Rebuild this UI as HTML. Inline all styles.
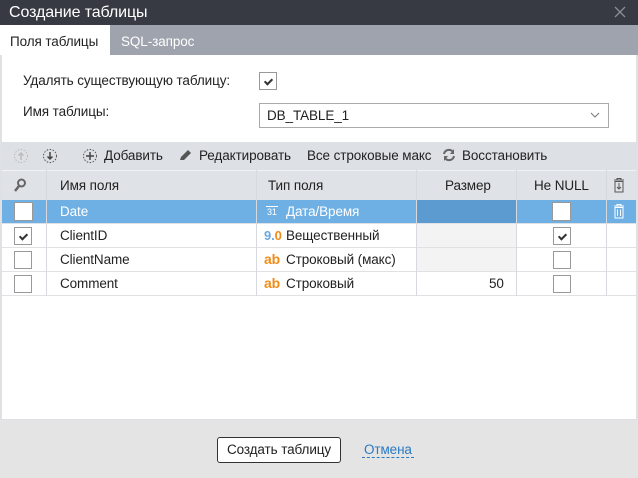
<!DOCTYPE html>
<html><head><meta charset="utf-8"><style>
*{margin:0;padding:0;box-sizing:border-box}
body{width:638px;height:478px;position:relative;overflow:hidden;background:#fff;font-family:"Liberation Sans","DejaVu Sans",sans-serif;font-size:13.5px;color:#222;letter-spacing:-0.1px}
.a{position:absolute}
.cb{position:absolute;width:18px;height:18px;border:1px solid #999;background:#fff}
.ck::after{content:"";position:absolute;left:6px;top:4px;width:3px;height:6px;border:solid #333;border-width:0 2px 2px 0;transform:rotate(45deg)}
.vl{position:absolute;top:170px;height:126px;width:1px;background:#d6d9de}
.hl{position:absolute;left:2px;width:634px;height:1px;background:#dfe1e4}
.ab{color:#f08c18;font-weight:bold;font-size:14px}
</style></head><body>
<div class="a" style="left:0;top:0;width:638px;height:25px;background:#373a43;color:#fff;font-size:16px;line-height:25px;padding-left:9px">Создание таблицы</div>
<svg class="a" style="left:614px;top:6px" width="12" height="12"><path d="M1 1L11 11M11 1L1 11" stroke="#8a8d95" stroke-width="1.3"/></svg>
<div class="a" style="left:0;top:25px;width:638px;height:30px;background:#9ea3ae"></div>
<div class="a" style="left:0;top:25px;width:110px;height:30px;background:#fff;line-height:34px;padding-left:10px">Поля таблицы</div>
<div class="a" style="left:121px;top:25px;line-height:34px;color:#fff">SQL-запрос</div>
<div class="a" style="left:0;top:55px;width:2px;height:365px;background:#dfe1e4"></div>
<div class="a" style="left:636px;top:55px;width:2px;height:365px;background:#dfe1e4"></div>
<div class="a" style="left:23px;top:73px">Удалять существующую таблицу:</div>
<div class="cb ck" style="left:259px;top:72px"></div>
<div class="a" style="left:23px;top:104px">Имя таблицы:</div>
<div class="a" style="left:259px;top:103px;width:350px;height:25px;border:1px solid #aaa;padding-left:7px;line-height:24px">DB_TABLE_1</div>
<svg class="a" style="left:590px;top:112px" width="10" height="6"><path d="M1 1L5 5L9 1" stroke="#777" fill="none"/></svg>
<div class="a" style="left:2px;top:142px;width:634px;height:28px;background:#dde0e5"></div>
<svg class="a" style="left:13px;top:148px" width="16" height="16"><circle cx="8" cy="8" r="6.5" fill="none" stroke="#bbb" stroke-dasharray="1.5 1.5"/><path d="M8 12V5M5.5 7.5L8 5L10.5 7.5" stroke="#bbb" stroke-width="1.5" fill="none"/></svg>
<svg class="a" style="left:42px;top:148px" width="16" height="16"><circle cx="8" cy="8" r="6.5" fill="none" stroke="#555" stroke-dasharray="1.5 1.5"/><path d="M8 4V11M5.5 8.5L8 11L10.5 8.5" stroke="#444" stroke-width="1.5" fill="none"/></svg>
<svg class="a" style="left:82px;top:148px" width="16" height="16"><circle cx="8" cy="8" r="6.5" fill="none" stroke="#555" stroke-dasharray="1.5 1.5"/><path d="M8 4V12M4 8H12" stroke="#444" stroke-width="1.5"/></svg>
<div class="a" style="left:104px;top:148px">Добавить</div>
<svg class="a" style="left:178px;top:148px" width="16" height="14"><path d="M2 12L3 9L10 2L13 5L6 12Z" fill="#555"/></svg>
<div class="a" style="left:199px;top:148px">Редактировать</div>
<div class="a" style="left:307px;top:148px">Все строковые макс</div>
<svg class="a" style="left:442px;top:148px" width="14" height="14"><path d="M2 6A5 5 0 0 1 11 4M12 8A5 5 0 0 1 3 10" stroke="#666" stroke-width="2" fill="none"/><path d="M12 1V6H8Z M2 13V8H6Z" fill="#666"/></svg>
<div class="a" style="left:462px;top:148px">Восстановить</div>
<div class="a" style="left:2px;top:170px;width:634px;height:30px;background:#dfe2e6;border-top:1px solid #f2f3f5"></div>
<svg class="a" style="left:13px;top:178px" width="14" height="14"><circle cx="8.5" cy="5" r="3.5" fill="none" stroke="#666" stroke-width="2"/><path d="M6 8L2 13" stroke="#666" stroke-width="2.5"/></svg>
<div class="a" style="left:60px;top:178px">Имя поля</div>
<div class="a" style="left:268px;top:178px">Тип поля</div>
<div class="a" style="left:445px;top:178px">Размер</div>
<div class="a" style="left:534px;top:178px">Не NULL</div>
<svg class="a" style="left:613px;top:178px" width="12" height="15"><path d="M1 2H11M4 2V0.5H8V2" stroke="#555" fill="none"/><rect x="2" y="3.5" width="8" height="10.5" fill="none" stroke="#555"/><path d="M6 5V11M4 9L6 11L8 9" stroke="#555" fill="none"/></svg>
<div class="a" style="left:2px;top:200px;width:634px;height:23px;background:#6eb0e4"></div>
<div class="a" style="left:416px;top:200px;width:100px;height:23px;background:#5c9bd0"></div>
<div class="a" style="left:416px;top:224px;width:100px;height:47px;background:#f3f3f3"></div>
<div class="hl" style="top:223px"></div><div class="hl" style="top:247px"></div><div class="hl" style="top:271px"></div><div class="hl" style="top:295px"></div>
<div class="vl" style="left:46px"></div><div class="vl" style="left:256px"></div><div class="vl" style="left:416px"></div><div class="vl" style="left:516px"></div><div class="vl" style="left:606px"></div>
<div class="cb" style="left:14px;top:202px;width:19px;height:19px"></div>
<div class="a" style="left:60px;top:204px;color:#fff">Date</div>
<div class="a" style="left:266px;top:206px;color:#fff;font-size:9px;border-top:1px solid #fff;line-height:11px;padding:0 1px">31</div>
<div class="a" style="left:286px;top:204px;color:#fff">Дата/Время</div>
<div class="cb" style="left:552px;top:202px;width:19px;height:19px"></div>
<svg class="a" style="left:613px;top:204px" width="12" height="15"><path d="M1 2H11M4 2V0.5H8V2" stroke="#fff" fill="none"/><rect x="2" y="3.5" width="8" height="10.5" fill="none" stroke="#fff"/><path d="M4.5 5.5V12M7.5 5.5V12" stroke="#fff"/></svg>
<div class="cb ck" style="left:14px;top:227px"></div>
<div class="a" style="left:60px;top:228px">ClientID</div>
<div class="a" style="left:264px;top:228px;font-weight:bold;font-size:13px;color:#6aa8de">9.<span style="color:#f08c18">0</span></div>
<div class="a" style="left:286px;top:228px">Вещественный</div>
<div class="cb ck" style="left:553px;top:227px"></div>
<div class="cb" style="left:14px;top:251px"></div>
<div class="a" style="left:60px;top:252px">ClientName</div>
<div class="a ab" style="left:264px;top:251px">ab</div>
<div class="a" style="left:286px;top:252px">Строковый (макс)</div>
<div class="cb" style="left:553px;top:251px"></div>
<div class="cb" style="left:14px;top:275px"></div>
<div class="a" style="left:60px;top:276px">Comment</div>
<div class="a ab" style="left:264px;top:275px">ab</div>
<div class="a" style="left:286px;top:276px">Строковый</div>
<div class="a" style="left:489px;top:276px">50</div>
<div class="cb" style="left:553px;top:275px"></div>
<div class="a" style="left:0;top:419px;width:638px;height:59px;background:#e4e4e4;border-top:1px solid #dcdfe3"></div>
<div class="a" style="left:217px;top:437px;width:124px;height:26px;border:1px solid #333;border-radius:3px;background:#fff;text-align:center;line-height:24px">Создать таблицу</div>
<div class="a" style="left:362px;top:442px;color:#2a7ac4;border-bottom:1px dashed #2a7ac4;padding:0 2px;line-height:15px">Отмена</div>
</body></html>
